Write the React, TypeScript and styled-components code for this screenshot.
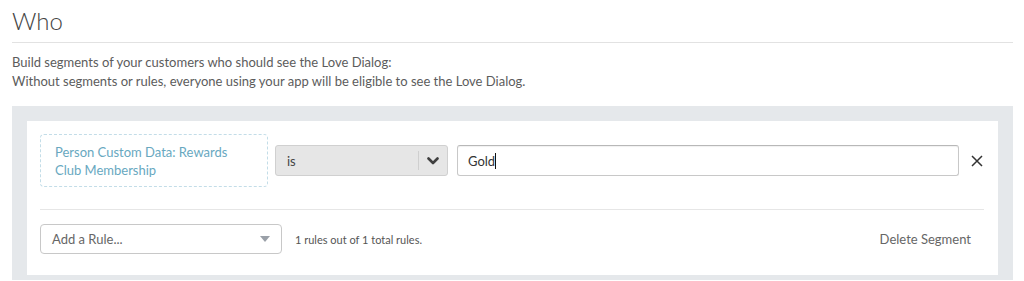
import { createGlobalStyle, styled } from "styled-components";

const GlobalStyle = createGlobalStyle`
  html, body {
    margin: 0;
    padding: 0;
    background: #ffffff;
  }
  body {
    font-family: Lato, "Open Sans", "Liberation Sans", sans-serif;
    color: #555;
  }
`;

export default function App() {
  return (
    <>
      <GlobalStyle />
      <Page>
        <Title>Who</Title>
        <Description>
          Build segments of your customers who should see the Love Dialog:
          <br />
          Without segments or rules, everyone using your app will be eligible to see the Love Dialog.
        </Description>
        <SegmentPanel>
          <SegmentCard>
            <RuleRow>
              <AttributeBox>Person Custom Data: Rewards Club Membership</AttributeBox>
              <OperatorSelect>
                <OperatorLabel>is</OperatorLabel>
                <OperatorArrow>
                  <svg width="12" height="8" viewBox="0 0 12 8">
                    <path
                      d="M1.5 1.5 L6 6 L10.5 1.5"
                      fill="none"
                      stroke="#3f3f3f"
                      strokeWidth="2.6"
                      strokeLinecap="round"
                      strokeLinejoin="round"
                    />
                  </svg>
                </OperatorArrow>
              </OperatorSelect>
              <ValueInput>
                Gold
                <Caret />
              </ValueInput>
              <RemoveButton>
                <svg width="12" height="12" viewBox="0 0 12 12">
                  <path d="M1 1 L11 11 M11 1 L1 11" stroke="#333" strokeWidth="1.5" />
                </svg>
              </RemoveButton>
            </RuleRow>
            <Divider />
            <FooterRow>
              <AddRuleSelect>
                Add a Rule...
                <svg width="10" height="6" viewBox="0 0 10 6">
                  <path d="M0 0 L10 0 L5 6 Z" fill="#9aa0a8" />
                </svg>
              </AddRuleSelect>
              <RuleCount>1 rules out of 1 total rules.</RuleCount>
              <DeleteButton>Delete Segment</DeleteButton>
            </FooterRow>
          </SegmentCard>
        </SegmentPanel>
      </Page>
    </>
  );
}

const Page = styled.div`
  padding: 0 11px 0 12px;
`;

const Title = styled.h1`
  margin: 0;
  padding: 6px 0 6px;
  font-size: 24px;
  line-height: 30px;
  font-weight: 300;
  color: #444;
  border-bottom: 1px solid #e2e2e2;
`;

const Description = styled.p`
  margin: 10px 0 0;
  font-size: 13px;
  line-height: 19px;
  color: #5c5c5c;
`;

const SegmentPanel = styled.div`
  margin-top: 15px;
  background: #e5e8eb;
  padding: 15px 15px 5px;
`;

const SegmentCard = styled.div`
  background: #fff;
  padding: 13px 14px 21px 13px;
`;

const RuleRow = styled.div`
  display: flex;
  align-items: center;
`;

const AttributeBox = styled.div`
  box-sizing: border-box;
  width: 228px;
  height: 53px;
  display: flex;
  align-items: center;
  padding: 0 14px;
  border: 1px dashed #c3dde8;
  border-radius: 4px;
  font-size: 13px;
  line-height: 18px;
  color: #68a8bf;
`;

const OperatorSelect = styled.div`
  box-sizing: border-box;
  margin-left: 7px;
  width: 173px;
  height: 31px;
  display: flex;
  align-items: center;
  background: #e6e6e6;
  border: 1px solid #d0d0d0;
  border-radius: 3px;
`;

const OperatorLabel = styled.span`
  flex: 1;
  padding-left: 11px;
  font-size: 13px;
  color: #444;
`;

const OperatorArrow = styled.span`
  width: 28px;
  height: 19px;
  display: flex;
  align-items: center;
  justify-content: center;
  border-left: 1px solid #cfcfcf;
`;

const ValueInput = styled.div`
  box-sizing: border-box;
  flex: 1;
  margin-left: 9px;
  height: 31px;
  display: flex;
  align-items: center;
  padding-left: 10px;
  border: 1px solid #c8c8c8;
  border-top-color: #b8b8b8;
  border-radius: 3px;
  box-shadow: inset 0 1px 1px rgba(0, 0, 0, 0.06);
  font-size: 13px;
  color: #333;
`;

const Caret = styled.span`
  display: inline-block;
  width: 1px;
  height: 16px;
  background: #111;
`;

const RemoveButton = styled.span`
  width: 14px;
  margin-left: 11px;
  display: flex;
  justify-content: center;
`;

const Divider = styled.div`
  margin-top: 22px;
  height: 1px;
  background: #e6e6e6;
`;

const FooterRow = styled.div`
  margin-top: 14px;
  display: flex;
  align-items: center;
`;

const AddRuleSelect = styled.div`
  box-sizing: border-box;
  width: 242px;
  height: 30px;
  display: flex;
  align-items: center;
  justify-content: space-between;
  padding: 0 11px 0 11px;
  border: 1px solid #c8c8c8;
  border-radius: 4px;
  font-size: 13px;
  color: #666;
`;

const RuleCount = styled.span`
  margin-left: 13px;
  font-size: 11px;
  color: #555;
`;

const DeleteButton = styled.span`
  margin-left: auto;
  padding-right: 13px;
  font-size: 13px;
  color: #666;
`;
